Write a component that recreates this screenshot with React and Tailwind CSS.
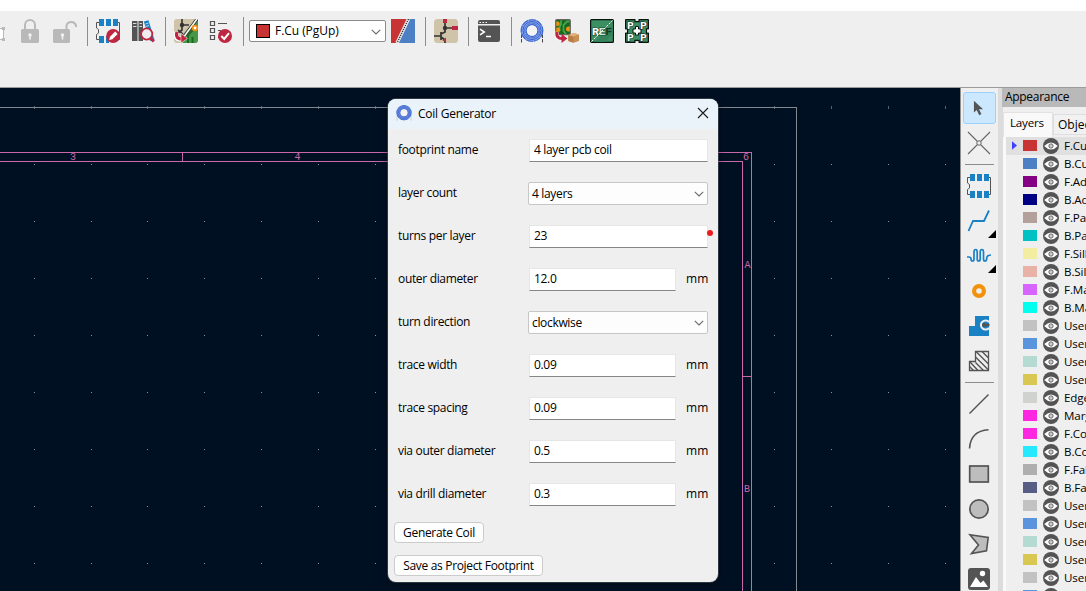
import React from "react";

/* ---------- top toolbar icons (24 x 24) ---------- */
const Svg = ({ children, className = "h-6 w-6" }) => (
  <svg viewBox="0 0 24 24" className={`${className} shrink-0`} fill="none">{children}</svg>
);

const Lock = ({ open }) => (
  <Svg>
    <path d={open ? "M13.5 11 V6.5 A5 5 0 0 1 23 6.5 V8" : "M7 11 V6 A5 5 0 0 1 17 6 V11"} stroke="#b9b9b9" strokeWidth="2" />
    <rect x={open ? 0 : 3} y="10" width={open ? 17 : 18} height="14" rx="1.5" fill="#b9b9b9" />
    <circle cx={open ? 9.5 : 12} cy="16" r="1.8" fill="#f0f0f0" />
    <path d={open ? "M9.5 16 V20.5" : "M12 16 V20.5"} stroke="#f0f0f0" strokeWidth="1.6" />
  </Svg>
);

const FootprintBody = ({ covered }) => (
  <>
    <path d="M3 3.5 H0.5 V9 L2.5 10.5 V14 L0.5 15.5 V20.5 H3 M21 3.5 H23.5 V20.5 H21" stroke="#545454" />
    <path d="M3 0 H8 V7 H3 Z M10 0 H15 V7 H10 Z M17 0 H22 V7 H17 Z M3 17 H8 V24 H3 Z" fill="#1a81c4" />
    {!covered && <path d="M10 17 H15 V24 H10 Z M17 17 H22 V24 H17 Z" fill="#1a81c4" />}
    {covered && <path d="M10 17 H13 V24 H10 Z" fill="#1a81c4" />}
  </>
);

const FootprintEdit = () => (
  <Svg>
    <FootprintBody covered />
    <circle cx="17.2" cy="17" r="7" fill="#bf2641" />
    <path d="M13.2 21 L14 17.8 L19.2 12.6 L21.6 15 L16.4 20.2 Z" fill="#fff" />
  </Svg>
);

const Library = () => (
  <Svg>
    <path d="M1 2 H6.5 V22 H1 Z M7.5 2 H12 V22 H7.5 Z" fill="#545454" />
    <path d="M2 4.5 H5.5 M2 7.5 H5.5 M8.5 4.5 H11 M8.5 7.5 H11" stroke="#d8d8d8" />
    <path d="M12.8 2.5 L17.5 1.2 L23.5 21 L19 22 Z" fill="#1a81c4" />
    <path d="M14.5 5 L17.5 4 M15 7.5 L18 6.5" stroke="#b7dcf4" />
    <path d="M19.5 19 L22.8 22.5" stroke="#bf2641" strokeWidth="3" />
    <circle cx="15.7" cy="15" r="5.6" fill="#efefef" stroke="#bf2641" strokeWidth="1.8" />
  </Svg>
);

const UpdateBoard = () => (
  <Svg>
    <rect width="24" height="24" rx="3" fill="#cfc3a8" />
    <path d="M22 0 Q24 0 24 3 V21 Q24 24 21 24 H9 L7 18 Z" fill="#489648" />
    <path d="M14 24 V18 Q14 15 17 13 L20 10 M18.5 24 V18" stroke="#1d6b22" strokeWidth="2" />
    <path d="M8 0 V11 L4 14 M8 6 H15 M4 11 L9 15" stroke="#333" strokeWidth="1.6" />
    <circle cx="8" cy="6" r="2.2" fill="#333" />
    <path d="M23 0 L9 19" stroke="#333" strokeWidth="3" />
    <path d="M23 0 L9 19" stroke="#fff" strokeWidth="1.5" />
    <circle cx="21" cy="9" r="2.3" fill="#fff" stroke="#f0910e" strokeWidth="1.8" />
    <path d="M3 13 Q0 21 8 20" stroke="#fff" strokeWidth="5" />
    <path d="M3 13 Q1 20 8 20" stroke="#bf2641" strokeWidth="3.2" />
    <path d="M7 14.5 L13.5 19.5 L7 24 Z" fill="#bf2641" stroke="#fff" strokeWidth=".5" />
  </Svg>
);

const DrcCheck = () => (
  <Svg>
    <path d="M1.5 2.5 H5.5 V6.5 H1.5 Z M1.5 9.5 H5.5 V13.5 H1.5 Z M1.5 16.5 H5.5 V20.5 H1.5 Z" stroke="#545454" strokeWidth="1.2" />
    <path d="M9 4.5 H18 M9 11.5 H12 M9 18.5 H11" stroke="#545454" strokeWidth="1.2" />
    <circle cx="16" cy="17" r="7" fill="#bf2641" />
    <path d="M12.3 17 L15.2 20 L20 14.2" stroke="#fff" strokeWidth="2" />
  </Svg>
);

const LayerPair = () => (
  <Svg>
    <path d="M0 0 H18 L5 24 H0 Z" fill="#c83434" />
    <path d="M18 0 H24 V24 H7 Z" fill="#4d7fc4" />
    <path d="M17.5 0 L6 24" stroke="#eee" strokeWidth="3.4" />
    <path d="M17.5 0 L6 24" stroke="#333" strokeWidth="1.4" strokeDasharray="1.2 1" />
  </Svg>
);

const SchematicIcon = () => (
  <Svg>
    <rect width="24" height="24" rx="3.5" fill="#cfc3a8" />
    <path d="M11 3 V13 L7 15 M11 9 H19 M0 17 H7 M7 13 V21 M7 18 L11 21 V24" stroke="#333" strokeWidth="1.7" />
    <circle cx="11" cy="9" r="2.2" fill="#333" />
    <path d="M9 0 H13 V4 H9 Z M18 7 H24 V11 H18 Z" fill="#bf2641" />
    <path d="M12 18.5 V23 L8.5 21.5 Z" fill="#bf2641" />
  </Svg>
);

const Terminal = () => (
  <Svg>
    <path d="M1 3 Q1 1 3 1 H21 Q23 1 23 3 V5 H1 Z M1 6.5 H23 V21 Q23 23 21 23 H3 Q1 23 1 21 Z" fill="#545454" />
    <path d="M2.5 3.5 H4 M5.5 3.5 H7 M8.5 3.5 H10" stroke="#fff" />
    <path d="M3 10.2 L7.3 13 L3 15.8 M9 17.5 H14" stroke="#fff" strokeWidth="1.5" />
  </Svg>
);

const CoilIcon = ({ className, pale }) => (
  <Svg className={className}>
    <path d="M1.5 15 V23.5 M22.5 15 V23.5" stroke={pale ? "#b8bac2" : "#444"} strokeDasharray="4 1" />
    <circle cx="12" cy="11.5" r="8.3" stroke={pale ? "#7592dc" : "#8aa5e8"} strokeWidth="6" />
    <circle cx="12" cy="11.5" r="10.8" stroke="#3763cf" strokeWidth="1.1" strokeDasharray="7 .9" />
    <circle cx="12" cy="11.5" r="9" stroke="#3763cf" strokeWidth="1" />
    <circle cx="12" cy="11.5" r="7.4" stroke="#3763cf" strokeWidth=".8" strokeDasharray="6 .8" />
    <circle cx="12" cy="11.5" r="5.9" stroke="#3763cf" strokeWidth="1.1" />
    <circle cx="12" cy="11.5" r="5.2" fill="#f3f3f4" />
  </Svg>
);

const ExportBoard = () => (
  <Svg>
    <rect x="0.7" y="0.7" width="14.6" height="15" rx="1" fill="#136b1b" stroke="#666" strokeWidth="1.2" />
    <path d="M6 1.5 V5 L4.5 8 V12 M14.5 2.5 H12 L8.5 6 V12 L11 15" stroke="#4ba34f" strokeWidth="1.8" />
    <path d="M1.3 2.5 H3 A2.3 2.3 0 0 1 3 7 H1.3 Z M1.3 8.7 A2.3 2.3 0 0 1 4 13 H1.3 Z M14.8 7.5 H13.5 A2.5 2.5 0 0 0 13.5 12.5 H14.8 Z" fill="#f0910e" />
    <path d="M2 13 Q0 20 8 19.5" stroke="#fff" strokeWidth="4.5" />
    <path d="M2 13 Q1 19.5 7 19.5" stroke="#bf2641" strokeWidth="3.2" />
    <path d="M6.5 14.8 L12.5 19.5 L6.5 24 Z" fill="#bf2641" />
    <path d="M13.3 16 L19 14 L24 15.5 V22 L18.5 23.8 L13.3 22 Z" fill="#c89055" />
    <path d="M13.3 16 L18.5 17.5 V23.8 L13.3 22 Z" fill="#b77d45" />
    <path d="M13.3 16 L19 14 L24 15.5 L18.5 17.5 Z" fill="#dfb27c" />
  </Svg>
);

const RefIcon = () => (
  <Svg>
    <rect x=".6" y=".6" width="22.8" height="22.8" rx="1" fill="#3c8e63" stroke="#07130d" strokeWidth="1.2" />
    <path d="M5 23 L23 5 V15 L15 23 Z" fill="#34835a" />
    <g fontSize="11.5" fontWeight="700" fontFamily="Liberation Mono, monospace">
      <text x="2" y="16" fill="#fff" stroke="#174d33" strokeWidth="1" paintOrder="stroke">R</text>
      <text x="8.7" y="16" fill="#cfe3d8" stroke="#174d33" strokeWidth="1" paintOrder="stroke">E</text>
      <text x="15.3" y="16" fill="#123c28">F</text>
    </g>
    <path d="M1.5 22.5 L22.5 1.5" stroke="#fff" strokeDasharray="2.2 1.3" />
  </Svg>
);

const PanelIcon = () => (
  <Svg>
    <path d="M1 .6 H10 V2.5 H14 V.6 H23 L23.4 1 V10 H21.5 V14 H23.4 V23 L23 23.4 H14 V21.5 H10 V23.4 H1 L.6 23 V14 H2.5 V10 H.6 V1 Z" fill="#3c8e63" stroke="#07130d" strokeWidth="1.3" />
    <path d="M10.5 7.5 H13.5 V10 H16 V14 H13.5 V16 H10.5 V14 H8 V10 H10.5 Z" fill="#fff" stroke="#07130d" />
    <path d="M0 10.5 H1.8 V13.5 H0 Z M22.2 10.5 H24 V13.5 H22.2 Z M10.7 0 H13.3 V1.8 H10.7 Z M10.7 22.2 H13.3 V24 H10.7 Z" fill="#efefef" />
    <g fontSize="11.5" fontWeight="700" fontFamily="Liberation Mono, monospace" fill="#fff" stroke="#07130d" strokeWidth="1.2" paintOrder="stroke">
      <text x="2" y="9.5">P</text><text x="15" y="9.5">P</text>
      <text x="2" y="21.8">P</text><text x="15" y="21.8">P</text>
    </g>
  </Svg>
);

const Sep = ({ className }) => <div className={`h-[29px] w-px shrink-0 self-start bg-[#8c8c8c] ${className}`} />;

const Chevron = ({ className }) => (
  <svg viewBox="0 0 10 6" className={`h-[6px] w-[10px] ${className}`} fill="none">
    <path d="M.8 .8 L5 5 L9.2 .8" stroke="#6a6a6a" strokeWidth="1.1" />
  </svg>
);

function Toolbar() {
  return (
    <div className="flex h-[77px] shrink-0 items-start border-b border-[#9c9c9c] bg-[#efefef] pt-[6px]">
      <div className="flex h-[28px] items-center">
        <svg viewBox="0 0 6 24" className="mr-3 h-6 w-[6px] shrink-0" fill="none">
          <path d="M0 9.5 H3.5 V20.5 H0" fill="#fff" stroke="#b9b9b9" />
          <path d="M2 8 H5 V11 H2 Z M2 19 H5 V22 H2 Z" fill="#b9b9b9" />
        </svg>
        <Lock />
        <div className="ml-[11px] flex"><Lock open /></div>
        <Sep className="ml-[10px] mr-2" />
        <FootprintEdit />
        <div className="ml-[11px] flex"><Library /></div>
        <Sep className="ml-[10px] mr-2" />
        <UpdateBoard />
        <div className="ml-[11px] flex"><DrcCheck /></div>
        <Sep className="ml-[10px] mr-[5px]" />
        <div className="flex h-[22px] w-[137px] items-center rounded-[2px] border border-[#8b8b8b] bg-white pl-[6px] pr-1">
          <span className="h-[14px] w-[14px] border border-black bg-[#c83434]" />
          <span className="ml-[5px] text-[12px] leading-none tracking-[-0.05px] text-black">F.Cu (PgUp)</span>
          <Chevron className="ml-auto mt-[2px]" />
        </div>
        <div className="ml-[5px] flex"><LayerPair /></div>
        <Sep className="ml-[10px] mr-2" />
        <SchematicIcon />
        <Sep className="ml-[10px] mr-2" />
        <Terminal />
        <Sep className="ml-[10px] mr-2" />
        <div className="flex gap-[11px]">
          <CoilIcon />
          <ExportBoard />
          <RefIcon />
          <PanelIcon />
        </div>
      </div>
    </div>
  );
}

/* ---------- board canvas ---------- */
const gridX = [34, 91, 147, 204, 261, 318, 375, 432, 489, 546, 603, 660, 717, 774, 831, 888, 945];
const gridY = [76, 133, 190, 247, 304, 361, 418, 475];

function Board() {
  return (
    <svg viewBox="0 0 960 503" className="h-[503px] w-[960px]" shapeRendering="crispEdges">
      <rect width="960" height="503" fill="#001023" />
      {gridX.map((x) => (
        <g key={x}>
          <rect x={x} y="18" width="1" height="3" fill="#5b626b" />
          {gridY.map((y) => <rect key={y} x={x} y={y} width="1" height="1" fill="#8b9097" />)}
        </g>
      ))}
      <path d="M0 19.5 H796.5 V503" fill="none" stroke="#84888c" />
      <path d="M0 64.5 H751.5 V503 M0 73.5 H742.5 V503 M182.5 64 V73 M742 288.5 H751" fill="none" stroke="#cb68a9" />
      <g fill="#cb68a9" fontSize="10" fontFamily="Liberation Mono, monospace" textAnchor="middle">
        <text x="73" y="72">3</text>
        <text x="297.5" y="72">4</text>
        <text x="746" y="72">6</text>
        <text x="747.5" y="180">A</text>
        <text x="747" y="404">B</text>
      </g>
    </svg>
  );
}

/* ---------- dialog ---------- */
const rows = [
  { label: "footprint name", value: "4 layer pcb coil" },
  { label: "layer count", value: "4 layers", select: true },
  { label: "turns per layer", value: "23", dot: true },
  { label: "outer diameter", value: "12.0", unit: "mm" },
  { label: "turn direction", value: "clockwise", select: true },
  { label: "trace width", value: "0.09", unit: "mm" },
  { label: "trace spacing", value: "0.09", unit: "mm" },
  { label: "via outer diameter", value: "0.5", unit: "mm" },
  { label: "via drill diameter", value: "0.3", unit: "mm" },
];

function Field({ label, value, select, unit, dot }) {
  return (
    <div className="flex h-[43px] shrink-0 items-center pl-[10px]">
      <span className="w-[130px] whitespace-nowrap pb-px">{label}</span>
      {select ? (
        <div className="flex h-[23px] w-[180px] items-center rounded-[2px] border border-[#c6c6c6] bg-[#fdfdfd] pl-[3px] pr-[3px]">
          <span className="pt-px">{value}</span>
          <Chevron className="ml-auto" />
        </div>
      ) : (
        <div className={`relative ml-px flex h-[23px] items-center border border-[#e6e6e6] border-b-[#868686] bg-white pl-1 ${unit ? "w-[147px]" : "w-[179px]"}`}>
          <span className="pb-px">{value}</span>
          {dot && <i className="absolute -right-[6px] top-[4px] h-[6px] w-[6px] rounded-full bg-[#ec1c1c]" />}
        </div>
      )}
      {unit && <span className="ml-[10px] pb-px tracking-[0.2px]">{unit}</span>}
    </div>
  );
}

function Dialog() {
  return (
    <div className="absolute left-[388px] top-[99px] flex h-[483px] w-[330px] flex-col overflow-hidden rounded-lg bg-[#efefef] text-[12px] leading-4 tracking-[-0.33px] text-black shadow-[0_0_0_1px_rgba(100,110,120,0.45),0_2px_8px_rgba(0,0,0,0.5)]">
      <div className="flex h-[30px] shrink-0 items-center bg-[#eaf3fa] pb-[2px] pl-2 pr-[9px]">
        <CoilIcon className="h-4 w-4" pale />
        <span className="ml-[6px] pt-px tracking-[-0.25px]">Coil Generator</span>
        <svg viewBox="0 0 12 12" className="ml-auto h-3 w-3" fill="none">
          <path d="M1 1 L11 11 M11 1 L1 11" stroke="#1b1b1b" strokeWidth="1.1" />
        </svg>
      </div>
      {rows.map((r) => <Field key={r.label} {...r} />)}
      <div className="flex flex-col items-start gap-3 pl-[6px] pt-[6px]">
        <button className="h-[21px] w-[90px] whitespace-nowrap rounded-[4px] border border-[#cbcbcb] bg-[#fdfdfd] text-center leading-none">Generate Coil</button>
        <button className="h-[21px] w-[149px] whitespace-nowrap rounded-[4px] border border-[#cbcbcb] bg-[#fdfdfd] text-center leading-none">Save as Project Footprint</button>
      </div>
    </div>
  );
}

/* ---------- right tool strip ---------- */
const Slot = ({ children, more }) => (
  <div className="relative flex h-[35px] w-full shrink-0 items-center justify-center pb-px">
    {children}
    {more && (
      <svg viewBox="0 0 8 8" className="absolute bottom-px right-px h-2 w-2"><path d="M8 0 V8 H0 Z" fill="#000" /></svg>
    )}
  </div>
);

const Rule = () => <div className="ml-1 h-px w-[29px] shrink-0 bg-[#8c8c8c]" />;

function ToolStrip() {
  return (
    <div className="flex w-[38px] shrink-0 flex-col overflow-hidden border-l border-[#8f8f8f] bg-[#efefef] pt-1">
      <div className="mx-[2px] flex h-8 w-[33px] shrink-0 items-center justify-center rounded-[3px] border border-[#99d1ff] bg-[#cce8ff]">
        <svg viewBox="0 0 12 16" className="mr-[3px] h-4 w-[11px]"><path d="M1 0 V13 L4 10.3 L6.8 15.8 L9.2 14.6 L6.5 9.4 H11 Z" fill="#545454" /></svg>
      </div>
      <div className="mt-[2px] flex w-[36px] flex-col">
        <Slot>
          <Svg>
            <path d="M1 1 L10.5 10.5 M23 1 L13.5 10.5 M1 23 L10.5 13.5 M23 23 L13.5 13.5" stroke="#666" strokeWidth="1.1" />
            <circle cx="12" cy="12" r="2.2" stroke="#666" fill="#efefef" />
          </Svg>
        </Slot>
        <div className="mt-[3px]"><Rule /></div>
        <div className="mt-1"><Slot><Svg><FootprintBody /></Svg></Slot></div>
        <Slot more>
          <Svg><path d="M1.5 22 L6 12 H17 L22 1.5" stroke="#1a81c4" strokeWidth="1.8" /></Svg>
        </Slot>
        <Slot more>
          <Svg><path d="M0 13 H2 Q4 13 4 15 Q4 17 5.5 17 Q7 17 7 15 V8 Q7 5.5 8.7 5.5 Q10.2 5.5 10.2 8 V15 Q10.2 17 11.7 17 Q13.2 17 13.2 15 V8 Q13.2 5.5 14.9 5.5 Q16.5 5.5 16.5 8 V15 Q16.5 17 18 17 Q19.7 17 19.7 14.5 Q19.7 11 24 11" stroke="#1a81c4" strokeWidth="1.7" /></Svg>
        </Slot>
        <Slot><Svg><circle cx="12" cy="12" r="4.9" stroke="#f2920c" strokeWidth="4.2" /></Svg></Slot>
        <Slot>
          <Svg>
            <path d="M8 2 H22 V22 H2 V12 H8 Z" fill="#1a81c4" />
            <path d="M22 8 A4.6 4.6 0 1 0 22 14" fill="none" stroke="#efefef" strokeWidth="2" />
            <path d="M17 9.8 H22.5 V12.2 H17 Z" fill="#545454" /><circle cx="17" cy="11" r="2" fill="#545454" />
          </Svg>
        </Slot>
        <Slot>
          <Svg>
            <path d="M8.5 2.5 H21.5 V21.5 H2.5 V12.5 H8.5 Z" stroke="#545454" strokeWidth="1.3" />
            <path d="M15 2.5 L21.5 9 M9 2.5 L21.5 15 M8.5 8 L21.5 21 M8.5 13.5 L16.5 21.5 M3 13 L11 21.5 M2.5 17.5 L6.5 21.5" stroke="#545454" strokeWidth="1.4" />
          </Svg>
        </Slot>
        <div className="mt-[3px]"><Rule /></div>
        <div className="mt-1"><Slot><Svg><path d="M2.5 21.5 L21.5 2.5" stroke="#545454" strokeWidth="1.5" /></Svg></Slot></div>
        <Slot><Svg><path d="M2.5 21.5 Q3.5 4 21.5 2.8" stroke="#545454" strokeWidth="1.6" /></Svg></Slot>
        <Slot><Svg><rect x="2.7" y="4" width="18.6" height="16" fill="#bdbdbd" stroke="#545454" strokeWidth="1.7" /></Svg></Slot>
        <Slot><Svg><circle cx="12" cy="12" r="9.2" fill="#bdbdbd" stroke="#545454" strokeWidth="1.7" /></Svg></Slot>
        <Slot><Svg><path d="M3 2.8 L21.2 5.5 L19.5 18.8 L4.5 21.5 L11.5 13 Z" fill="#bdbdbd" stroke="#545454" strokeWidth="1.6" /></Svg></Slot>
        <Slot>
          <Svg>
            <rect x="1" y="1" width="22" height="22" rx="3" fill="#545454" />
            <path d="M3 20 L9 10 L13.5 16 L16.5 13.5 L21 20 Z" fill="#fff" /><circle cx="15.5" cy="6.5" r="2.7" fill="#fff" />
          </Svg>
        </Slot>
      </div>
    </div>
  );
}

/* ---------- appearance panel ---------- */
const layers = [
  ["F.Cu", "#c83434"], ["B.Cu", "#4d7fc4"], ["F.Adhesive", "#840084"], ["B.Adhesive", "#000084"],
  ["F.Paste", "#b4a09a"], ["B.Paste", "#00c2c2"], ["F.Silkscreen", "#f2eda1"], ["B.Silkscreen", "#e8b2a7"],
  ["F.Mask", "#d864ff"], ["B.Mask", "#02ffee"], ["User.Drawings", "#c2c2c2"], ["User.Comments", "#5994dc"],
  ["User.Eco1", "#b4dbd2"], ["User.Eco2", "#d8c852"], ["Edge.Cuts", "#d0d2cd"], ["Margin", "#ff26e2"],
  ["F.Courtyard", "#ff26e2"], ["B.Courtyard", "#26e9ff"], ["F.Fab", "#afafaf"], ["B.Fab", "#585d84"],
  ["User.1", "#c2c2c2"], ["User.2", "#5994dc"], ["User.3", "#b4dbd2"], ["User.4", "#d8c852"],
  ["User.5", "#c2c2c2"], ["User.6", "#5994dc"],
];

const Eye = () => (
  <svg viewBox="0 0 16 16" className="h-4 w-4 shrink-0" fill="none">
    <circle cx="8" cy="8" r="8" fill="#545454" />
    <path d="M1.2 8 Q8 0.8 14.8 8 Q8 15.2 1.2 8 Z" fill="#fff" />
    <circle cx="8" cy="8" r="2.1" stroke="#545454" strokeWidth="1" />
    <circle cx="8" cy="8" r=".8" fill="#8a8a8a" />
  </svg>
);

function Appearance() {
  return (
    <div className="flex min-w-0 flex-1 flex-col overflow-hidden border-l-4 border-[#dcdcdc] bg-[#efefef] text-[12px] leading-4 text-black">
      <div className="flex h-[19px] shrink-0 items-center bg-[#b9b9b9] pb-px pl-[3px] tracking-[-0.3px]">Appearance</div>
      <div className="flex flex-col border-l border-[#dcdcdc]">
        <div className="mt-[5px] flex h-[25px] shrink-0 items-end">
          <div className="flex h-[25px] w-[50px] shrink-0 items-center border border-b-0 border-[#e2e2e2] bg-[#f9f9f9] pb-1 pl-[6px] text-[11.6px] tracking-[-0.2px]">Layers</div>
          <div className="mb-[2px] flex h-[21px] w-[80px] shrink-0 items-center border border-[#dedede] bg-[#f1f1f1] pl-1">Objects</div>
        </div>
        <div className="flex flex-col border-l-[3px] border-[#f9f9f9]">
          {layers.map(([name, color], i) => (
            <div key={name} className={`flex h-[18px] shrink-0 items-center ${i === 0 ? "bg-[#e0e0e0]" : ""}`}>
              <svg viewBox="0 0 6 10" className="mb-px ml-[6px] h-[9px] w-[5px] shrink-0">{i === 0 && <path d="M0 0 L6 5 L0 10 Z" fill="#4040ff" />}</svg>
              <span className="mb-px ml-[6px] h-[11px] w-[14px] shrink-0" style={{ backgroundColor: color }} />
              <span className="ml-[6px] flex"><Eye /></span>
              <span className="ml-[5px] whitespace-nowrap text-[11.6px] tracking-[-0.1px]">{name}</span>
            </div>
          ))}
        </div>
      </div>
    </div>
  );
}

export default function App() {
  return (
    <div className="relative flex h-[591px] w-[1086px] flex-col overflow-hidden bg-white pt-[11px] font-['Open_Sans','Noto_Sans',sans-serif]">
      <Toolbar />
      <div className="flex h-[503px] shrink-0">
        <Board />
        <ToolStrip />
        <Appearance />
      </div>
      <Dialog />
    </div>
  );
}
